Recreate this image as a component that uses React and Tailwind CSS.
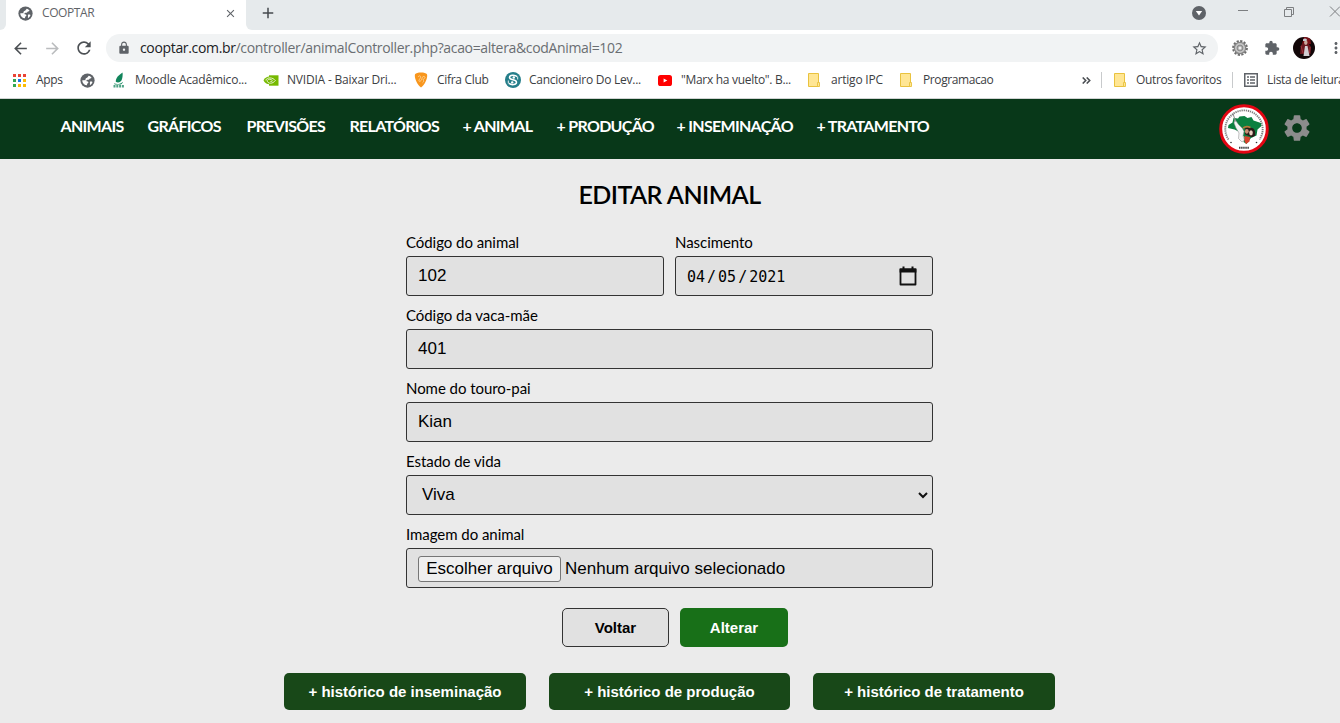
import React from "react";
import {
  MdArrowBack,
  MdArrowForward,
  MdRefresh,
  MdLock,
  MdStarBorder,
  MdExtension,
  MdSettings,
  MdMoreVert,
  MdAdd,
  MdClose,
} from "react-icons/md";

const UI = "font-['Open_Sans',sans-serif]";
const LATO = "font-['Lato',sans-serif]";
const ARIAL = "font-['Liberation_Sans',Arial,sans-serif]";

function Globe() {
  return (
    <svg viewBox="0 0 16 16" className="block h-[15px] w-[15px] shrink-0">
      <circle cx="8" cy="8" r="7.6" fill="#5f6368" />
      <path d="M9.300 2.800c1.300.3 2.300 1 3 2.200-.4.700-1 .9-1.800.8-.5 1.100-1.200 1.600-2.200 1.500-.8 0-1 .8-1.700 1H5.400c1.300.4 3 .3 3.500 1.400.2.900-.4 1.400-1.200 1.700l-.3 1.600c-2.700-.2-4.500-2-4.900-4.300V7.600h2.300c.9-.1 1.200-.7 1.200-1.500.3-.8 1.300-.9 1.800-1.400z" fill="#fff" />
      <path d="M10.600 9.400c.9-.4 1.900-.3 2.700.2-.4 1.400-1.300 2.500-2.500 3.100-.6-.6.1-1.400-.2-2z" fill="#fff" />
    </svg>
  );
}

function Folder() {
  return (
    <svg viewBox="0 0 14 16" className="block h-4 w-[14px] shrink-0">
      <path d="M.5 1.500h10v13H.5z" fill="#ffe694" stroke="#e9c23e" />
      <path d="M9.500 10.500h2v4h-2z" fill="#ffe694" stroke="#e9c23e" strokeWidth=".9" />
    </svg>
  );
}

function AppsGrid() {
  const colors = ["#ea4335", "#ea4335", "#ea4335", "#34a853", "#1a73e8", "#fbbc04", "#34a853", "#fbbc04", "#fbbc04"];
  return (
    <svg viewBox="0 0 13 13" className="block h-[13px] w-[13px] shrink-0">
      {colors.map((c, i) => (
        <rect key={i} x={(i % 3) * 5} y={Math.floor(i / 3) * 5} width="3" height="3" fill={c} />
      ))}
    </svg>
  );
}

function Leaf() {
  return (
    <svg viewBox="0 0 14 16" className="block h-4 w-[14px] shrink-0">
      <path d="M10.500.5C7 3 3.500 5.500 3.800 9.800c2.700 1.600 5.500 0 6.200-2.800.5-2.100.9-4.500.5-6.500z" fill="#11845b" />
      <path d="M2 10.600c2 1.500 6.500 1.500 8.500-2.400" stroke="#fff" strokeWidth=".5" fill="none" />
      <path d="M2 11.300c3 1.300 6.500.8 9-1.600-.3 1.500-1.500 2.500-2.600 2.800H2.800z" fill="#11845b" />
      <path d="M1.500 14.200h10.500" stroke="#4fa385" strokeWidth="2.400" strokeDasharray="2 .8" />
    </svg>
  );
}

function Nvidia() {
  return (
    <svg viewBox="0 0 16 11" className="block h-[11px] w-4 shrink-0">
      <path d="M6 .3h9.500v10.400H6z" fill="#76b900" />
      <path d="M.5 5.300C2 2.600 4 1.500 6.500 1.500v7.800C3.800 9.200 1.600 7.800.5 5.300z" fill="#76b900" />
      <path d="M2.500 5.300c1-1.600 2.500-2.400 4.200-2.400 2.500 0 4.400 1.100 5.600 2.600-1.300 1.700-2.800 2.700-4.900 2.700-1.700 0-3-.9-3.300-2.600.8-1.200 1.900-1.500 3-1.300 1 .1 1.700.7 2.300 1.400-.6.700-1.200 1-2 .9" fill="none" stroke="#fff" strokeWidth=".8" />
    </svg>
  );
}

function Pick() {
  return (
    <svg viewBox="0 0 14 16" className="block h-4 w-[14px] shrink-0">
      <path d="M7 .6c2.800 0 5 .7 6 1.600C14 5.500 11 12.500 7 15.500 3 12.500 0 5.500 1 2.200 2 1.300 4.200.6 7 .6z" fill="#f8961d" />
      <path d="M4 5c2-2.500 3.500-.5 2 1.500S4.500 10 6.500 9s1-5 3.500-4.500-.5 3-1 3 2 1.500-.5 3.300" fill="none" stroke="#fde0b0" strokeWidth=".7" />
    </svg>
  );
}

function Songbook() {
  return (
    <svg viewBox="0 0 16 16" className="block h-4 w-4 shrink-0">
      <circle cx="8" cy="8" r="8" fill="#257e8a" />
      <path d="M12 4.600C10 2.700 4.300 2.800 4.500 5.600c.3 2.700 6.900 1.800 7 4.600 0 2.700-5 3.200-7.500 1.200" fill="none" stroke="#fff" strokeWidth="1.500" />
      <circle cx="8.800" cy="5.500" r="1.200" fill="#fff" />
      <circle cx="7.200" cy="10.400" r="1.200" fill="#fff" />
      <path d="M3.300 8.500v3M12.700 4.500v3" stroke="#fff" strokeWidth=".9" />
    </svg>
  );
}

function Youtube() {
  return (
    <svg viewBox="0 0 14 11" className="block h-[11px] w-[14px] shrink-0">
      <rect width="14" height="11" rx="2.600" fill="#f00" />
      <path d="M5.600 3.400v4.200l3.700-2.100z" fill="#fff" />
    </svg>
  );
}

function ReadingList() {
  return (
    <svg viewBox="0 0 14 14" className="block h-[14px] w-[14px] shrink-0">
      <rect x=".75" y=".75" width="12.500" height="12.500" fill="none" stroke="#5f6368" strokeWidth="1.500" />
      <path d="M3 4h2M3 7h2M3 10h2M6 4h5M6 7h5M6 10h5" stroke="#5f6368" strokeWidth="1.400" />
    </svg>
  );
}

function Cog() {
  return (
    <svg viewBox="0 0 16 16" className="block h-4 w-4">
      <circle cx="8" cy="8" r="6.900" fill="none" stroke="#6c6c6c" strokeWidth="2" strokeDasharray="2.200 1.410" />
      <circle cx="8" cy="8" r="5.700" fill="#c4c4c4" stroke="#858585" strokeWidth="1.200" />
      <circle cx="8" cy="8" r="2.900" fill="#aaa" stroke="#808080" strokeWidth=".8" />
      <circle cx="8" cy="8" r="1.500" fill="#eee" />
    </svg>
  );
}

function Avatar() {
  return (
    <svg viewBox="0 0 22 22" className="block h-[22px] w-[22px] rounded-full">
      <rect width="22" height="22" fill="#120708" />
      <path d="M11 0h6l1 7H9z" fill="#7c1017" />
      <path d="M8 8l3-2h4l3 4-.5 7H7z" fill="#6b1820" />
      <path d="M12 9h2.500l2 10h-6z" fill="#d3ced2" />
      <ellipse cx="12.800" cy="5.500" rx="1.700" ry="2.400" fill="#caa79c" />
      <path d="M10 2.500c1-1.500 3-1.500 4 0l-1 1.500h-3z" fill="#c8ccd4" />
      <path d="M8 9l2 7M17 10l-.5 6" stroke="#b0434b" strokeWidth=".7" />
    </svg>
  );
}

function Emblem() {
  return (
    <svg viewBox="0 0 50 50" className="block h-[50px] w-[50px]">
      <circle cx="25" cy="25" r="23.300" fill="#fff" stroke="#e30613" strokeWidth="3" />
      <path d="M9.500 35.500A18.700 18.700 0 1 1 40.500 35.500" fill="none" stroke="#4a4a4a" strokeWidth="1.900" strokeDasharray="1.300 .8" opacity=".7" />
      <path d="M20 43.700h10" stroke="#444" strokeWidth="1.900" strokeDasharray="1.500 .6" />
      <path d="M9.500 21l4-2.500 1-4.500 4.500.5 1.500-2 5-.5 3 2 4-1 2 3.500 7.500 2.500.5 3-4 3.500-1 6-5.500 2.500-4.500 6-3-2 1-4.500-4-5-6-3-6.500-1.500z" fill="#0b8040" />
      <path d="M16 15.500l3.500 5 4 4 1.500 3-1 4.500 1.500 4-2.500 2-3.500-3.500.5-5.500-3-5-2-5z" fill="#f4f4f4" stroke="#888" strokeWidth=".5" />
      <path d="M14 9.500l2.500 8" stroke="#888" strokeWidth="1" />
      <path d="M26 24.500c2-2 4-2 5.500-.8 3.500-.2 5.500 3 4.500 8l-3 1.500-7-3z" fill="#2a1b17" />
      <ellipse cx="27.800" cy="27.300" rx="1.900" ry="2.400" fill="#c98f74" />
      <ellipse cx="32" cy="28.800" rx="1.800" ry="2.600" fill="#ead0c0" />
      <path d="M24 24c2.500-1.800 5-1.700 7.500-.5" stroke="#b8793a" strokeWidth="1.600" fill="none" />
      <path d="M25.500 32l5.500 1-.5 4.500-3.500 2.500-1.500-3z" fill="#d9402c" />
      <circle cx="12" cy="38.500" r=".8" fill="#333" />
      <circle cx="37.500" cy="38.500" r=".8" fill="#333" />
    </svg>
  );
}

function Bookmark({ icon, label, box, text }) {
  return (
    <div className={`flex h-full shrink-0 items-center ${box}`}>
      {icon}
      <span className={`whitespace-nowrap ${text}`}>{label}</span>
    </div>
  );
}

function TabStrip() {
  return (
    <div className="flex h-[30px] bg-[#e6eaec]">
      <div className="w-1.5 shrink-0 bg-white">
        <div className="h-full rounded-br-md bg-[#e6eaec]" />
      </div>
      <div className="flex w-60 shrink-0 items-center bg-white pb-1 pl-3 text-[#5f6368]">
        <Globe />
        <span className="ml-[9px] w-[182px] text-xs tracking-[-0.4px]">COOPTAR</span>
        <MdClose className="h-[13px] w-[13px]" />
      </div>
      <div className="flex-1 bg-white">
        <div className="flex h-full items-center rounded-bl-md bg-[#e6eaec] pb-1 pl-[13px]">
          <MdAdd className="h-[18px] w-[18px] text-[#45494d]" />
          <div className="ml-auto flex shrink-0 items-center">
            <svg viewBox="0 0 14 14" className="h-[14px] w-[14px]">
              <circle cx="7" cy="7" r="7" fill="#5f6368" />
              <path d="M3.800 5h6.400L7 9.600z" fill="#fff" />
            </svg>
            <svg viewBox="0 0 102 14" className="ml-[32px] h-[14px] w-[102px]" fill="none" stroke="#7c7f81">
              <path d="M0 4.500h10M46.500 3.500h7v7h-7zM48.500 3V1.500h7v7h-1.500M92 .5l10 10M102 .5l-10 10" />
            </svg>
          </div>
        </div>
      </div>
    </div>
  );
}

function Toolbar() {
  return (
    <div className="flex h-9 items-center bg-white pl-[11px] text-[#5f6368]">
      <MdArrowBack className="h-[19px] w-[19px] shrink-0 text-[#4c5054]" />
      <MdArrowForward className="ml-[13px] h-[19px] w-[19px] shrink-0 text-[#babcbe]" />
      <MdRefresh className="ml-3 h-[20px] w-[20px] shrink-0 text-[#4c5054]" />
      <div className="ml-3 flex h-7 w-[1112px] shrink-0 items-center rounded-full bg-[#f1f3f4] pl-[11px] pr-2.5">
        <MdLock className="h-[14px] w-[14px]" />
        <span className="ml-[9px] text-sm tracking-[-0.34px] text-[#6a6e72]">
          <span className="text-[#202124]">cooptar.com.br</span>/controller/animalController.php?acao=altera&amp;codAnimal=102
        </span>
        <MdStarBorder className="ml-auto h-[17px] w-[17px]" />
      </div>
      <div className="ml-[14px] shrink-0"><Cog /></div>
      <MdExtension className="ml-4 h-4 w-4 shrink-0" />
      <div className="ml-[13px] shrink-0"><Avatar /></div>
      <MdMoreVert className="ml-[12px] h-[18px] w-[18px] shrink-0" />
    </div>
  );
}

function BookmarksBar() {
  return (
    <div className="flex h-[33px] items-center overflow-hidden border-b border-[#d0d3d3] bg-white pb-1 pl-[13px] text-xs text-[#3c4043]">
      <Bookmark icon={<AppsGrid />} label="Apps" box="w-[67px]" text="ml-[10px] tracking-[-0.3px]" />
      <Bookmark icon={<Globe />} box="w-8" text="" />
      <Bookmark icon={<Leaf />} label="Moodle Acadêmico..." box="w-[151px]" text="ml-[9px] tracking-[-0.22px]" />
      <Bookmark icon={<Nvidia />} label="NVIDIA - Baixar Dri..." box="w-[151px]" text="ml-[8px] tracking-[-0.2px]" />
      <Bookmark icon={<Pick />} label="Cifra Club" box="w-[91px]" text="ml-[9px] tracking-[-0.3px]" />
      <Bookmark icon={<Songbook />} label="Cancioneiro Do Lev..." box="w-[153px]" text="ml-[8px] tracking-[-0.26px]" />
      <Bookmark icon={<Youtube />} label={'"Marx ha vuelto". B...'} box="w-[150px]" text="ml-[9px] tracking-[-0.3px]" />
      <Bookmark icon={<Folder />} label="artigo IPC" box="w-[92px]" text="ml-[9px] tracking-[-0.2px]" />
      <Bookmark icon={<Folder />} label="Programacao" box="w-[182px]" text="ml-[9px] tracking-[-0.4px]" />
      <svg viewBox="0 0 9 7" className="h-[7px] w-[9px] shrink-0" fill="none" stroke="#4c5054" strokeWidth="1.600">
        <path d="M.7.500l3 3-3 3M4.700.500l3 3-3 3" />
      </svg>
      <div className="ml-[10px] h-4 w-px shrink-0 bg-[#c8cacc]" />
      <div className="w-3 shrink-0" />
      <Bookmark icon={<Folder />} label="Outros favoritos" box="w-[118px]" text="ml-[8px] tracking-[-0.36px]" />
      <div className="h-4 w-px shrink-0 bg-[#c8cacc]" />
      <div className="w-[11px] shrink-0" />
      <Bookmark icon={<ReadingList />} label="Lista de leitura" box="w-[96px]" text="ml-[9px] tracking-[-0.3px]" />
    </div>
  );
}

const NAV = [
  ["ANIMAIS", "w-[87px]"],
  ["GRÁFICOS", "w-[99px]"],
  ["PREVISÕES", "w-[103px]"],
  ["RELATÓRIOS", "w-[113px]"],
  ["+ ANIMAL", "w-[94px]"],
  ["+ PRODUÇÃO", "w-[120px]"],
  ["+ INSEMINAÇÃO", "w-[140px]"],
  ["+ TRATAMENTO", "w-[120px]"],
];

function SiteHeader() {
  return (
    <header className={`flex h-[60px] items-center bg-[#083819] pl-[60.5px] pr-[27px] text-white ${LATO}`}>
      <nav className="flex pb-1.5 text-base font-bold tracking-[-0.7px]">
        {NAV.map(([label, width]) => (
          <a key={label} className={`shrink-0 whitespace-nowrap ${width}`}>{label}</a>
        ))}
      </nav>
      <div className="ml-auto flex items-center gap-3">
        <Emblem />
        <MdSettings className="mb-0.5 h-8 w-8 text-[#8c8c8c]" />
      </div>
    </header>
  );
}

function Field({ label, children }) {
  return (
    <label className="block">
      <span className={`block h-[26px] text-[15px] leading-6 tracking-[-0.05px] ${LATO}`}>{label}</span>
      <span className={`flex h-10 items-center rounded-[3px] border border-[#333] bg-[#e1e1e1] px-[11px] text-[17px] ${ARIAL}`}>
        {children}
      </span>
    </label>
  );
}

function EditForm() {
  return (
    <main className="flex w-[1339px] flex-col items-center text-black">
      <h1 className={`mt-[17px] h-9 text-[25px] leading-9 font-semibold tracking-[-0.55px] ${LATO}`}>EDITAR ANIMAL</h1>
      <form className="mt-[18px] flex w-[527px] flex-col gap-[7px]">
        <div className="grid grid-cols-[258px_258px] gap-[11px]">
          <Field label="Código do animal">102</Field>
          <Field label="Nascimento">
            <span className="flex pt-0.5 font-['DejaVu_Sans_Mono',monospace] text-[15px]">
              <span>04</span>
              <span className="mx-[2px]">/</span>
              <span>05</span>
              <span className="mx-[2px]">/</span>
              <span>2021</span>
            </span>
            <svg viewBox="0 0 18 20" className="ml-auto mr-1 h-5 w-[18px]">
              <path d="M1.500 3.500h15v15h-15z" fill="none" stroke="#111" strokeWidth="1.800" strokeLinejoin="round" />
              <path d="M.6 2.600h16.800v4H.6zM3.500.5h2V3h-2zM12.500.5h2V3h-2z" fill="#111" />
            </svg>
          </Field>
        </div>
        <Field label="Código da vaca-mãe">401</Field>
        <Field label="Nome do touro-pai">Kian</Field>
        <Field label="Estado de vida">
          <span className="pl-1">Viva</span>
          <svg viewBox="0 0 10 7" className="ml-auto -mr-[7px] h-[7px] w-[10px]">
            <path d="M1 1l4 4 4-4" fill="none" stroke="#111" strokeWidth="2" />
          </svg>
        </Field>
        <Field label="Imagem do animal">
          <span className="mt-[2px] flex h-[26px] w-[143px] items-center justify-center rounded-[3px] border border-[#767676] bg-[#efefef] whitespace-nowrap">Escolher arquivo</span>
          <span className="mt-[2px] ml-1">Nenhum arquivo selecionado</span>
        </Field>
      </form>
      <div className={`mt-5 flex gap-[11px] pl-[11px] text-[15px] font-bold ${ARIAL}`}>
        <button className="h-[39px] w-[107px] rounded-[5px] border border-[#333] bg-[#e1e1e1] pt-0.5">Voltar</button>
        <button className="h-[39px] w-[108px] rounded-[5px] bg-[#187018] pt-0.5 text-white">Alterar</button>
      </div>
      <div className={`mt-[26px] flex gap-[23px] text-[15px] font-bold text-white ${ARIAL}`}>
        <button className="h-[37px] w-[242px] rounded-[5px] bg-[#184818] pt-0.5">+ histórico de inseminação</button>
        <button className="h-[37px] w-[241px] rounded-[5px] bg-[#184818] pt-0.5">+ histórico de produção</button>
        <button className="h-[37px] w-[242px] rounded-[5px] bg-[#184818] pt-0.5">+ histórico de tratamento</button>
      </div>
    </main>
  );
}

export default function App() {
  return (
    <div className="h-[723px] w-[1340px] overflow-hidden bg-[#ebebeb]">
      <div className={UI}>
        <TabStrip />
        <Toolbar />
        <BookmarksBar />
      </div>
      <SiteHeader />
      <EditForm />
    </div>
  );
}
